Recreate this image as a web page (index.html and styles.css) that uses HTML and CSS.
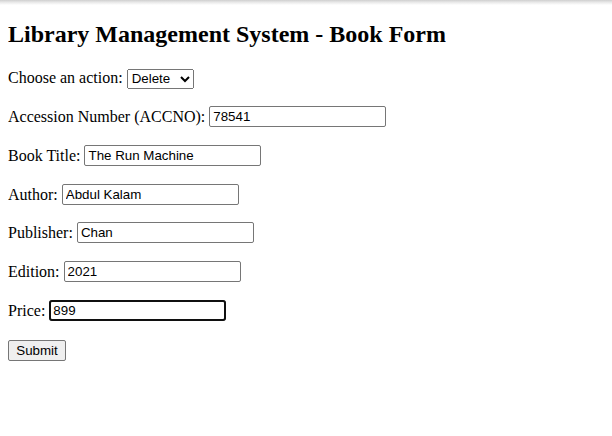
FILE: index.html
```html
<!DOCTYPE html>
<html>
<head>
<meta charset="utf-8">
<title>Library Management System - Book Form</title>
<link rel="stylesheet" href="styles.css">
</head>
<body>
<div class="topshade"></div>
<h2 class="title">Library Management System - Book Form</h2>
<form class="book-form">
  <p class="row">
    <label for="action">Choose an action:</label>
    <select id="action" class="field-select">
      <option>Insert</option>
      <option>Update</option>
      <option selected>Delete</option>
    </select>
  </p>
  <p class="row">
    <label for="accno">Accession Number (ACCNO):</label>
    <input type="text" id="accno" class="field" value="78541">
  </p>
  <p class="row">
    <label for="title">Book Title:</label>
    <input type="text" id="title" class="field" value="The Run Machine">
  </p>
  <p class="row">
    <label for="author">Author:</label>
    <input type="text" id="author" class="field" value="Abdul Kalam">
  </p>
  <p class="row">
    <label for="publisher">Publisher:</label>
    <input type="text" id="publisher" class="field" value="Chan">
  </p>
  <p class="row">
    <label for="edition">Edition:</label>
    <input type="text" id="edition" class="field" value="2021">
  </p>
  <p class="row">
    <label for="price">Price:</label>
    <input type="text" id="price" class="field field-focused" value="899">
  </p>
  <p class="row">
    <input type="submit" class="submit-btn" value="Submit">
  </p>
</form>
</body>
</html>
```

FILE: styles.css
```css
html {
  background: #ffffff;
}

body {
  margin: 8px;
  font-family: "Liberation Serif", "Times New Roman", serif;
  font-size: 16px;
  color: #000000;
}

.topshade {
  position: fixed;
  top: 0;
  left: 0;
  right: 0;
  height: 5px;
  background: linear-gradient(to bottom, #cfcfcf, #e6e6e6 40%, #ffffff);
}

.title {
  font-size: 24px;
  font-weight: bold;
  margin: 13px 0 19px;
}

.row {
  margin: 16px 0;
  line-height: 22.86px;
}

.field,
.field-select,
.submit-btn {
  font-family: "Liberation Sans", Arial, sans-serif;
  font-size: 13.333px;
  line-height: normal;
  color: #000000;
  box-sizing: border-box;
}

.field {
  width: 177px;
  height: 21px;
  padding: 1px 3px;
  border: 1px solid #767676;
  border-radius: 2px;
  vertical-align: 1px;
}

.field-select {
  width: 67px;
  height: 20px;
}

.field-focused {
  outline: 2px solid #101010;
  outline-offset: -2px;
  border-radius: 3px;
}

.submit-btn {
  width: 58px;
  height: 21px;
  padding: 1px 6px;
  background: #efefef;
  border: 1px solid #767676;
  border-radius: 2px;
}
```
